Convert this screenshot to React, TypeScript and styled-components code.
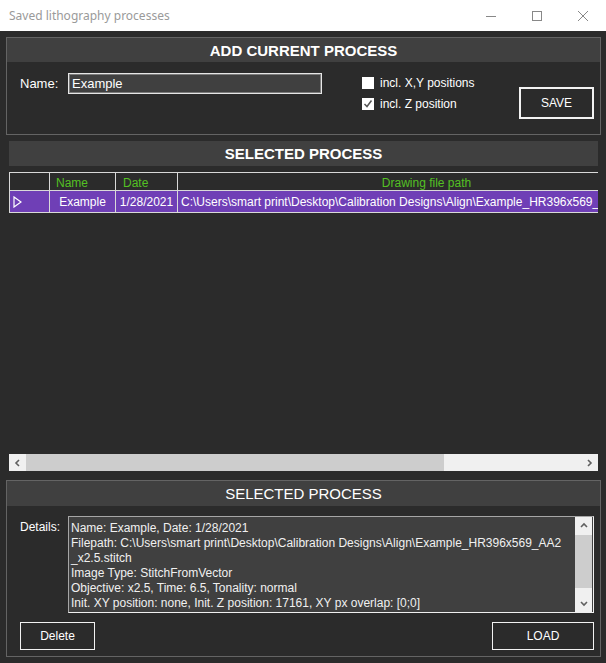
import * as React from 'react'
import styled, { createGlobalStyle } from 'styled-components'

const GlobalStyle = createGlobalStyle`
  html, body {
    margin: 0;
    padding: 0;
    background: #2b2b2b;
  }
  * {
    box-sizing: border-box;
  }
`

const Window = styled.div`
  width: 606px;
  height: 663px;
  display: flex;
  flex-direction: column;
  background: #2b2b2b;
  font-family: 'Liberation Sans', Arial, sans-serif;
  color: #f4f4f4;
  overflow: hidden;
`

const TitleBar = styled.div`
  height: 31px;
  flex-shrink: 0;
  background: #fff;
  display: flex;
  align-items: center;
  padding-left: 9px;
`

const Title = styled.div`
  flex: 1;
  font-family: 'Segoe UI', 'Noto Sans', sans-serif;
  font-size: 12px;
  color: #9a9a9a;
`

const Control = styled.div`
  width: 46px;
  height: 31px;
  display: flex;
  align-items: center;
  justify-content: center;
`

const Body = styled.div`
  flex: 1;
  display: flex;
  flex-direction: column;
  padding: 6px 5px 0 6px;
`

const Group = styled.div<{ $height: number; $top?: number }>`
  height: ${(p) => p.$height}px;
  margin-top: ${(p) => p.$top || 0}px;
  border: 1px solid #646464;
  display: flex;
  flex-direction: column;
  flex-shrink: 0;
`

const Header = styled.div<{ $height: number; $bold?: boolean }>`
  height: ${(p) => p.$height}px;
  flex-shrink: 0;
  background: #404040;
  display: flex;
  align-items: center;
  justify-content: center;
  color: #fff;
  font-size: 15px;
  font-weight: ${(p) => (p.$bold ? 'bold' : 'normal')};
`

const SectionHeader = styled(Header)`
  margin: 6px 3px 0;
`

const AddBody = styled.div`
  flex: 1;
  display: flex;
  align-items: flex-start;
  padding: 0 6px 0 13px;
`

const FieldRow = styled.div<{ $top: number }>`
  display: flex;
  align-items: center;
  margin-top: ${(p) => p.$top}px;
`

const Label = styled.div`
  width: 48px;
  font-size: 13px;
  color: #fff;
`

const NameInput = styled.div`
  width: 254px;
  height: 21px;
  background: #404040;
  border: 1px solid #e6e6e6;
  box-shadow: inset 0 0 0 1px #7c7c7c;
  font-size: 13px;
  color: #fff;
  display: flex;
  align-items: center;
  padding-left: 3px;
`

const Checks = styled.div`
  display: flex;
  flex-direction: column;
  gap: 9px;
  margin: 15px 0 0 40px;
`

const CheckRow = styled.div`
  display: flex;
  align-items: center;
  gap: 6px;
  height: 12px;
  font-size: 12px;
  color: #fff;
`

const Box = styled.div`
  width: 12px;
  height: 12px;
  background: #fff;
  display: flex;
  align-items: center;
  justify-content: center;
`

const Button = styled.div<{ $w: number; $h: number; $thick?: boolean }>`
  width: ${(p) => p.$w}px;
  height: ${(p) => p.$h}px;
  border: ${(p) => (p.$thick ? 2 : 1)}px solid #f2f2f2;
  display: flex;
  align-items: center;
  justify-content: center;
  font-size: 12px;
  color: #fff;
  flex-shrink: 0;
`

const SaveButton = styled(Button)`
  margin: 25px 0 0 auto;
`

const Grid = styled.div`
  height: 299px;
  margin: 6px 3px 0;
  display: flex;
  flex-direction: column;
  flex-shrink: 0;
`

const TableArea = styled.div`
  flex: 1;
  overflow: hidden;
`

const Table = styled.div`
  display: grid;
  grid-template-columns: 40px 66px 62px 498px;
  width: 666px;
`

const HeadCell = styled.div<{ $align: string; $pad?: number }>`
  height: 18px;
  border-top: 1px solid #d9d9d9;
  border-left: 1px solid #d9d9d9;
  color: #54c023;
  font-size: 12px;
  display: flex;
  align-items: center;
  padding-top: 3px;
  justify-content: ${(p) => p.$align};
  padding-left: ${(p) => p.$pad || 0}px;
`

const DataCell = styled.div<{ $align: string; $pad?: number }>`
  height: 23px;
  border-top: 1px solid #d9d9d9;
  border-bottom: 1px solid #d9d9d9;
  border-left: 1px solid #d9d9d9;
  background: #6f3fb6;
  color: #fff;
  font-size: 12px;
  white-space: nowrap;
  overflow: hidden;
  display: flex;
  align-items: center;
  justify-content: ${(p) => p.$align};
  padding-left: ${(p) => p.$pad || 0}px;
`

const HScroll = styled.div`
  height: 17px;
  display: flex;
  background: #f0f0f0;
  flex-shrink: 0;
`

const Arrow = styled.div<{ $w: number; $h: number }>`
  width: ${(p) => p.$w}px;
  height: ${(p) => p.$h}px;
  display: flex;
  align-items: center;
  justify-content: center;
  flex-shrink: 0;
`

const HTrack = styled.div`
  flex: 1;
  display: flex;
`

const HThumb = styled.div`
  width: 418px;
  background: #cdcdcd;
`

const DetailsBody = styled.div`
  flex: 1;
  display: flex;
  flex-direction: column;
  padding: 10px 6px 0 13px;
`

const DetailsRow = styled.div`
  display: flex;
  align-items: flex-start;
`

const DetailsLabel = styled(Label)`
  font-size: 12px;
  padding-top: 4px;
`

const TextBox = styled.div`
  width: 526px;
  height: 97px;
  background: #404040;
  border: 1px solid #a6a6a6;
  border-bottom-color: #f0f0f0;
  border-right-color: #f0f0f0;
  display: flex;
`

const TextLines = styled.div`
  flex: 1;
  padding: 4px 0 0 2px;
  font-size: 12px;
  line-height: 15px;
  color: #f0f0f0;
  white-space: nowrap;
  overflow: hidden;
`

const VScroll = styled.div`
  width: 17px;
  margin-right: 1px;
  background: #f0f0f0;
  display: flex;
  flex-direction: column;
`

const VTrack = styled.div`
  flex: 1;
  padding-top: 1px;
`

const VThumb = styled.div`
  height: 53px;
  background: #cdcdcd;
`

const ButtonRow = styled.div`
  display: flex;
  justify-content: space-between;
  margin-top: 9px;
`

const Chevron = ({ dir }: { dir: 'left' | 'right' | 'up' | 'down' }) => {
  const pts = {
    left: '5,1 2,4 5,7',
    right: '2,1 5,4 2,7',
    up: '1,5 4,2 7,5',
    down: '1,2 4,5 7,2',
  }[dir]
  return (
    <svg width="8" height="8" viewBox="0 0 8 8">
      <polyline points={pts} fill="none" stroke="#606060" strokeWidth="1.6" />
    </svg>
  )
}

const detailLines = [
  'Name: Example, Date: 1/28/2021',
  'Filepath: C:\\Users\\smart print\\Desktop\\Calibration Designs\\Align\\Example_HR396x569_AA2',
  '_x2.5.stitch',
  'Image Type: StitchFromVector',
  'Objective: x2.5, Time: 6.5, Tonality: normal',
  'Init. XY position: none, Init. Z position: 17161, XY px overlap: [0;0]',
]

const App: React.FC = () => {
  return (
    <Window>
      <GlobalStyle />
      <TitleBar>
        <Title>Saved lithography processes</Title>
        <Control>
          <svg width="10" height="10" viewBox="0 0 10 10">
            <line x1="0" y1="5.5" x2="10" y2="5.5" stroke="#888" strokeWidth="1" />
          </svg>
        </Control>
        <Control>
          <svg width="10" height="10" viewBox="0 0 10 10">
            <rect x="0.5" y="0.5" width="9" height="9" fill="none" stroke="#888" strokeWidth="1" />
          </svg>
        </Control>
        <Control>
          <svg width="10" height="10" viewBox="0 0 10 10">
            <path d="M0 0 L10 10 M10 0 L0 10" stroke="#888" strokeWidth="1" />
          </svg>
        </Control>
      </TitleBar>

      <Body>
        <Group $height={98}>
          <Header $height={24} $bold>
            ADD CURRENT PROCESS
          </Header>
          <AddBody>
            <FieldRow $top={11}>
              <Label>Name:</Label>
              <NameInput>Example</NameInput>
            </FieldRow>
            <Checks>
              <CheckRow>
                <Box />
                incl. X,Y positions
              </CheckRow>
              <CheckRow>
                <Box>
                  <svg width="10" height="10" viewBox="0 0 10 10">
                    <polyline points="1.5,5 4,7.5 8.5,1.5" fill="none" stroke="#555" strokeWidth="1.5" />
                  </svg>
                </Box>
                incl. Z position
              </CheckRow>
            </Checks>
            <SaveButton $w={75} $h={32} $thick>
              SAVE
            </SaveButton>
          </AddBody>
        </Group>

        <SectionHeader $height={25} $bold>
          SELECTED PROCESS
        </SectionHeader>

        <Grid>
          <TableArea>
            <Table>
              <HeadCell $align="flex-start" />
              <HeadCell $align="flex-start" $pad={6}>
                Name
              </HeadCell>
              <HeadCell $align="flex-start" $pad={7}>
                Date
              </HeadCell>
              <HeadCell $align="center">Drawing file path</HeadCell>

              <DataCell $align="flex-start" $pad={3}>
                <svg width="9" height="12" viewBox="0 0 9 12">
                  <polygon points="1,1 8,6 1,11" fill="none" stroke="#fff" strokeWidth="1.2" />
                </svg>
              </DataCell>
              <DataCell $align="center">Example</DataCell>
              <DataCell $align="center">1/28/2021</DataCell>
              <DataCell $align="flex-start" $pad={3}>
                C:\Users\smart print\Desktop\Calibration Designs\Align\Example_HR396x569_AA2_x2.5.stitch
              </DataCell>
            </Table>
          </TableArea>
          <HScroll>
            <Arrow $w={17} $h={17}>
              <Chevron dir="left" />
            </Arrow>
            <HTrack>
              <HThumb />
            </HTrack>
            <Arrow $w={17} $h={17}>
              <Chevron dir="right" />
            </Arrow>
          </HScroll>
        </Grid>

        <Group $height={177} $top={9}>
          <Header $height={25}>SELECTED PROCESS</Header>
          <DetailsBody>
            <DetailsRow>
              <DetailsLabel>Details:</DetailsLabel>
              <TextBox>
                <TextLines>
                  {detailLines.map((line) => (
                    <div key={line}>{line}</div>
                  ))}
                </TextLines>
                <VScroll>
                  <Arrow $w={17} $h={17}>
                    <Chevron dir="up" />
                  </Arrow>
                  <VTrack>
                    <VThumb />
                  </VTrack>
                  <Arrow $w={17} $h={17}>
                    <Chevron dir="down" />
                  </Arrow>
                </VScroll>
              </TextBox>
            </DetailsRow>
            <ButtonRow>
              <Button $w={75} $h={28}>
                Delete
              </Button>
              <Button $w={102} $h={28}>
                LOAD
              </Button>
            </ButtonRow>
          </DetailsBody>
        </Group>
      </Body>
    </Window>
  )
}

export default App
